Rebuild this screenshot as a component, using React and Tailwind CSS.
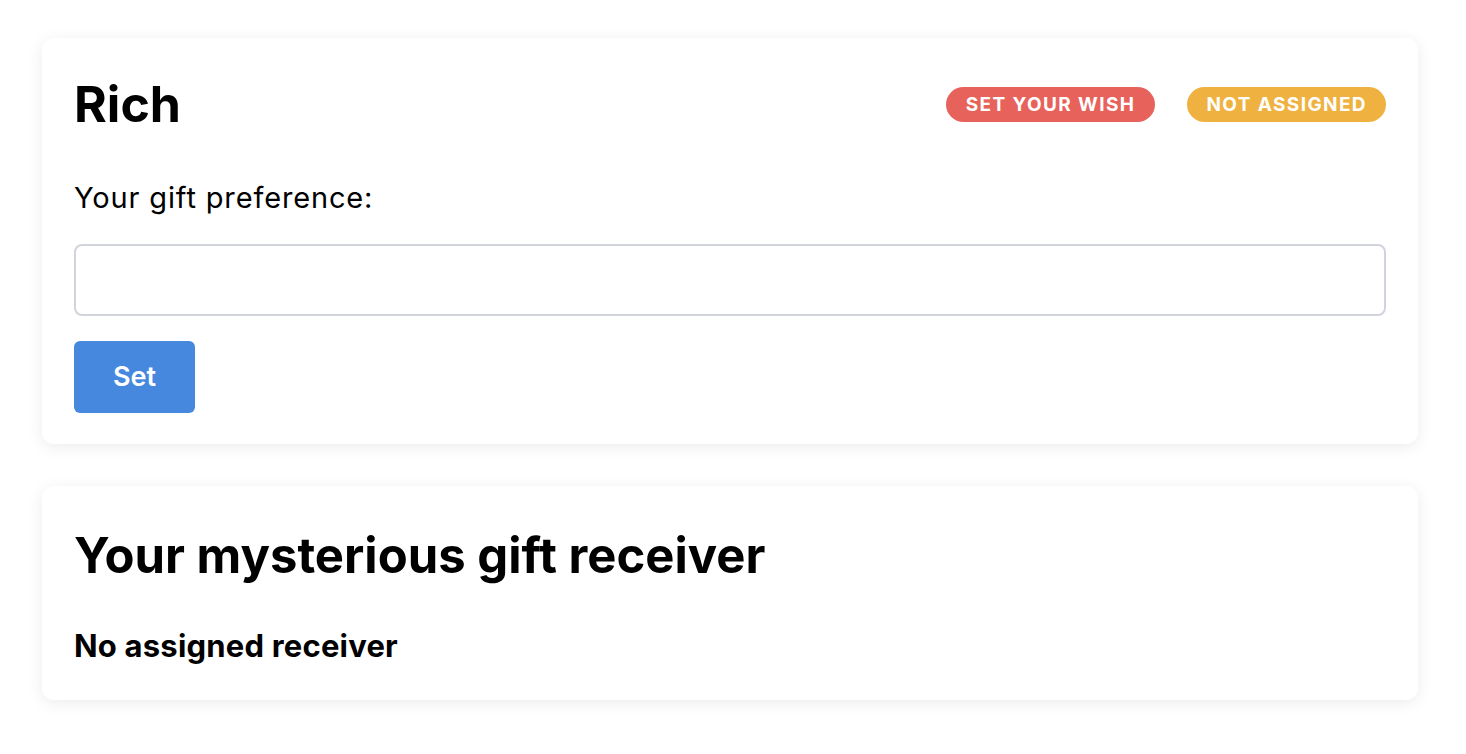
export default function App() {
  return (
    <div className="min-h-screen bg-white pl-[42px] pr-[48px] pt-[38px] pb-10 font-['Inter',sans-serif] text-black">
      <div className="flex flex-col gap-[42px]">
        {/* Wish card */}
        <section className="rounded-[12px] bg-white px-[32px] pt-[30px] pb-[31px] shadow-[0_3px_16px_rgba(0,0,0,0.08)]">
          <div className="flex items-center justify-between">
            <h1 className="text-[50px] font-bold leading-[72px]">Rich</h1>
            <div className="flex items-center gap-8">
              <span className="rounded-full bg-[#e8625c] px-[20px] py-[6px] text-[19px] font-bold leading-[23px] tracking-[1.4px] text-white">
                SET YOUR WISH
              </span>
              <span className="rounded-full bg-[#efb240] px-[19px] py-[6px] text-[19px] font-bold leading-[23px] tracking-[1.4px] text-white">
                NOT ASSIGNED
              </span>
            </div>
          </div>
          <p className="mt-[41px] text-[29px] leading-[34px] tracking-[0.85px]">Your gift preference:</p>
          <input
            type="text"
            className="mt-[29px] block h-[72px] w-full rounded-[8px] border-2 border-[#d1d5db] px-4 text-[26px] outline-none"
          />
          <button className="mt-[25px] block h-[72px] w-[121px] rounded-[6px] bg-[#4788df] text-[27px] font-semibold text-white">
            Set
          </button>
        </section>

        {/* Receiver card */}
        <section className="rounded-[12px] bg-white px-[32px] pt-[40px] pb-[36px] shadow-[0_3px_16px_rgba(0,0,0,0.08)]">
          <h2 className="text-[49px] font-bold leading-[60px]">Your mysterious gift receiver</h2>
          <p className="mt-[42px] text-[31px] font-bold leading-[36px] tracking-[0.2px]">No assigned receiver</p>
        </section>
      </div>
    </div>
  )
}
